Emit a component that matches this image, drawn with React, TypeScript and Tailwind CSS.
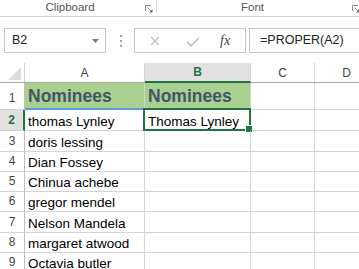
const COLS = [
  { key: "A", width: "w-[120px]" },
  { key: "B", width: "w-[106px]" },
  { key: "C", width: "w-[64px]" },
  { key: "D", width: "w-[64px]" },
];

const ROWS: { n: number; h: string; a: string; b?: string }[] = [
  { n: 2, h: "h-[21px]", a: "thomas Lynley", b: "Thomas Lynley" },
  { n: 3, h: "h-[21px]", a: "doris lessing" },
  { n: 4, h: "h-[20px]", a: "Dian Fossey" },
  { n: 5, h: "h-[20px]", a: "Chinua achebe" },
  { n: 6, h: "h-[20px]", a: "gregor mendel" },
  { n: 7, h: "h-[21px]", a: "Nelson Mandela" },
  { n: 8, h: "h-[20px]", a: "margaret atwood" },
  { n: 9, h: "h-[20px]", a: "Octavia butler" },
];

const Launcher = () => (
  <svg width="8" height="8" viewBox="0 0 8 8" className="shrink-0">
    <path d="M0.5 6V0.5H6" fill="none" stroke="#8a8a8a" strokeWidth="1" />
    <path d="M2.5 2.5L7 7" stroke="#8a8a8a" strokeWidth="1" />
    <path d="M4 7.5H7.5V4Z" fill="#6f6f6f" />
  </svg>
);

const Ribbon = () => (
  <div className="flex h-[17px] border-b border-[#d4d4d4] text-[11.5px] leading-[15px] text-[#555]">
    <div className="w-[140px] shrink-0 text-center">Clipboard</div>
    <div className="ml-[5px] mt-[5px] shrink-0">
      <Launcher />
    </div>
    <div className="ml-[3px] h-[12px] w-px shrink-0 bg-[#d4d4d4]" />
    <div className="ml-[84px] shrink-0">Font</div>
    <div className="ml-[88px] mt-[5px] shrink-0">
      <Launcher />
    </div>
  </div>
);

const FormulaBar = () => (
  <div className="mt-[11px] flex h-[25px] items-center text-[12.5px] text-[#222]">
    <div className="ml-[4px] flex h-[25px] w-[102px] shrink-0 items-center justify-between border border-[#c6c6c6] pl-[7px] pr-[6px]">
      <span>B2</span>
      <svg width="7" height="4" viewBox="0 0 7 4">
        <path d="M0 0H7L3.5 4Z" fill="#7a7a7a" />
      </svg>
    </div>
    <div className="ml-[14px] flex shrink-0 flex-col gap-[3px]">
      <span className="h-[2px] w-[2px] bg-[#a6a6a6]" />
      <span className="h-[2px] w-[2px] bg-[#a6a6a6]" />
      <span className="h-[2px] w-[2px] bg-[#a6a6a6]" />
    </div>
    <div className="ml-[12px] flex h-[25px] w-[112px] shrink-0 items-center border border-[#c6c6c6]">
      <svg width="10" height="10" viewBox="0 0 10 10" className="ml-[15px] shrink-0">
        <path d="M1 1L9 9M9 1L1 9" stroke="#bdbdbd" strokeWidth="1.3" />
      </svg>
      <svg width="14" height="10" viewBox="0 0 14 10" className="ml-[26px] mt-[3px] shrink-0">
        <path d="M1 5L5 9L13 1" fill="none" stroke="#c8c8c8" strokeWidth="1.8" />
      </svg>
      <span className="ml-[20px] font-['Liberation_Serif'] text-[14px] italic text-[#444]">fx</span>
    </div>
    <div className="ml-[3px] flex h-[25px] w-[130px] shrink-0 items-center border border-[#c6c6c6] pl-[10px]">
      =PROPER(A2)
    </div>
  </div>
);

const ColumnHeaders = () => (
  <div className="flex h-[20px] border-b border-[#ababab] text-[12px] text-[#444]">
    <div className="relative w-[25px] shrink-0 border-r border-[#d4d4d4]">
      <svg width="14" height="13" viewBox="0 0 14 13" className="absolute bottom-[2px] right-[2px]">
        <path d="M13 0V13H0Z" fill="#dcdcdc" />
      </svg>
    </div>
    {COLS.map((c) =>
      c.key === "B" ? (
        <div
          key={c.key}
          className={`${c.width} -mb-px flex shrink-0 items-center justify-center border-b-2 border-r border-b-[#217346] border-r-[#d4d4d4] bg-[#e1e1e1] pb-px font-bold text-[#217346]`}
        >
          {c.key}
        </div>
      ) : (
        <div
          key={c.key}
          className={`${c.width} flex shrink-0 items-center justify-center border-r border-[#d4d4d4]`}
        >
          {c.key}
        </div>
      )
    )}
  </div>
);

const HeaderRow = () => (
  <div className="flex h-[27px]">
    <div className="flex w-[25px] shrink-0 items-end justify-center border-b border-r border-b-[#d4d4d4] border-r-[#bfbfbf] pb-[4px] text-[12px] leading-[14px] text-[#444]">
      1
    </div>
    <div className="flex w-[120px] shrink-0 items-end border-b-2 border-r border-b-[#5b9bd5] border-r-[#d4d4d4] bg-[#a9d08e] pb-[2px] pl-[3px] text-[17.5px] font-bold leading-[20px] text-[#44546a]">
      Nominees
    </div>
    <div className="flex w-[106px] shrink-0 items-end border-b border-r border-[#d4d4d4] bg-[#a9d08e] pb-[3px] pl-[3px] text-[17.5px] font-bold leading-[20px] text-[#44546a]">
      Nominees
    </div>
    <div className="w-[64px] shrink-0 border-b border-r border-[#d4d4d4]" />
    <div className="w-[64px] shrink-0 border-b border-r border-[#d4d4d4]" />
  </div>
);

const DataRow = ({ row }: { row: (typeof ROWS)[number] }) => {
  const active = row.n === 2;
  return (
    <div className={`flex ${row.h}`}>
      <div
        className={`flex w-[25px] shrink-0 items-end justify-center border-b pb-[3px] text-[12px] leading-[14px] ${
          active
            ? "border-r-2 border-b-[#d4d4d4] border-r-[#217346] bg-[#e1e1e1] font-bold text-[#217346]"
            : "border-r border-b-[#d4d4d4] border-r-[#bfbfbf] text-[#444]"
        }`}
      >
        {row.n}
      </div>
      <div className="flex w-[120px] shrink-0 items-end border-b border-r border-[#d4d4d4] pl-[3px] text-[13.5px] leading-[16px] text-black">
        {row.a}
      </div>
      <div className="relative flex w-[106px] shrink-0 items-end border-b border-r border-[#d4d4d4] pl-[3px] text-[13.5px] leading-[16px] text-black">
        {row.b}
        {active && (
          <div className="absolute -bottom-px -left-[2px] -right-px -top-[2px] border-2 border-[#217346]">
            <div className="absolute -bottom-[3px] -right-[3px] h-[6px] w-[6px] bg-[#217346] outline outline-1 outline-white" />
          </div>
        )}
      </div>
      <div className="w-[64px] shrink-0 border-b border-r border-[#d4d4d4]" />
      <div className="w-[64px] shrink-0 border-b border-r border-[#d4d4d4]" />
    </div>
  );
};

export default function App() {
  return (
    <div className="h-[269px] w-[359px] overflow-hidden bg-white font-['Liberation_Sans',Arial,sans-serif]">
      <Ribbon />
      <FormulaBar />
      <div className="mt-[10px]">
        <ColumnHeaders />
        <HeaderRow />
        {ROWS.map((r) => (
          <DataRow key={r.n} row={r} />
        ))}
      </div>
    </div>
  );
}
